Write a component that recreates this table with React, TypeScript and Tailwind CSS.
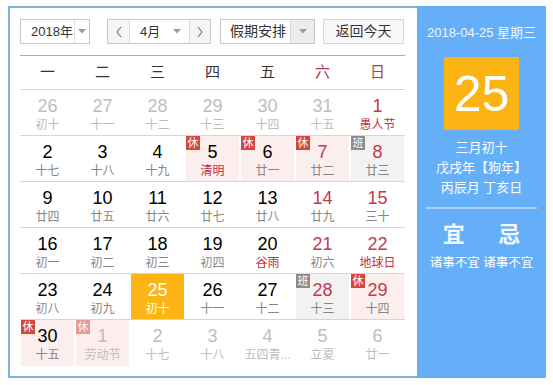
import React from 'react';

type Day = {
    n: number;
    l: string;
    other?: boolean;
    fest?: boolean;
    tag?: '休' | '班';
    today?: boolean;
};

const WEEK = ['一', '二', '三', '四', '五', '六', '日'];

const ROWS: Day[][] = [
    [
        { n: 26, l: '初十', other: true },
        { n: 27, l: '十一', other: true },
        { n: 28, l: '十二', other: true },
        { n: 29, l: '十三', other: true },
        { n: 30, l: '十四', other: true },
        { n: 31, l: '十五', other: true },
        { n: 1, l: '愚人节', fest: true },
    ],
    [
        { n: 2, l: '十七' },
        { n: 3, l: '十八' },
        { n: 4, l: '十九' },
        { n: 5, l: '清明', fest: true, tag: '休' },
        { n: 6, l: '廿一', tag: '休' },
        { n: 7, l: '廿二', tag: '休' },
        { n: 8, l: '廿三', tag: '班' },
    ],
    [
        { n: 9, l: '廿四' },
        { n: 10, l: '廿五' },
        { n: 11, l: '廿六' },
        { n: 12, l: '廿七' },
        { n: 13, l: '廿八' },
        { n: 14, l: '廿九' },
        { n: 15, l: '三十' },
    ],
    [
        { n: 16, l: '初一' },
        { n: 17, l: '初二' },
        { n: 18, l: '初三' },
        { n: 19, l: '初四' },
        { n: 20, l: '谷雨', fest: true },
        { n: 21, l: '初六' },
        { n: 22, l: '地球日', fest: true },
    ],
    [
        { n: 23, l: '初八' },
        { n: 24, l: '初九' },
        { n: 25, l: '初十', today: true },
        { n: 26, l: '十一' },
        { n: 27, l: '十二' },
        { n: 28, l: '十三', tag: '班' },
        { n: 29, l: '十四', tag: '休' },
    ],
    [
        { n: 30, l: '十五', tag: '休' },
        { n: 1, l: '劳动节', other: true, tag: '休' },
        { n: 2, l: '十七', other: true },
        { n: 3, l: '十八', other: true },
        { n: 4, l: '五四青...', other: true },
        { n: 5, l: '立夏', other: true },
        { n: 6, l: '廿一', other: true },
    ],
];

const FONT = "font-['Liberation_Sans','Noto_Sans_CJK_SC',sans-serif]";

// small grey triangle used in the select boxes
const Caret = () => (
    <svg width="8" height="5" viewBox="0 0 8 5">
        <polygon points="0,0 8,0 4,4.5" fill="#9a9a9a" />
    </svg>
);

const Chevron = ({ dir }: { dir: 'left' | 'right' }) => (
    <svg width="8" height="12" viewBox="0 0 8 12">
        <polyline
            points={dir === 'left' ? '6,1 2,6 6,11' : '2,1 6,6 2,11'}
            fill="none"
            stroke="#555"
            strokeWidth="1"
        />
    </svg>
);

const Cell = ({ d, col }: { d: Day; col: number }) => {
    const weekend = col >= 5;
    let bg = '';
    if (d.today) bg = 'bg-[#fcb514]';
    else if (d.tag === '休') bg = 'bg-[#fdeeee]';
    else if (d.tag === '班') bg = 'bg-[#f2f2f2]';

    let numColor = 'text-black';
    if (d.other) numColor = 'text-[#bdbdbd]';
    else if (d.today) numColor = 'text-white';
    else if (weekend) numColor = 'text-[#c23a4c]';

    let lunarColor = 'text-[#868686]';
    if (d.other) lunarColor = 'text-[#bdbdbd]';
    else if (d.today) lunarColor = 'text-white';
    else if (d.fest) lunarColor = 'text-[#c2303c]';

    return (
        <div className={`relative mx-px flex flex-col items-center ${bg}`}>
            {d.tag && (
                <span
                    className={`absolute left-0 top-0 flex h-[14px] w-[14px] items-center justify-center text-[11px] leading-none text-white ${
                        d.tag === '休' ? 'bg-[#d5473d]' : 'bg-[#8c8c8c]'
                    } ${d.other ? 'opacity-50' : ''}`}
                >
                    {d.tag}
                </span>
            )}
            <span className={`pt-[5px] text-[18px] leading-[22px] ${numColor}`}>{d.n}</span>
            <span className={`whitespace-nowrap text-[12px] leading-[16px] ${lunarColor}`}>{d.l}</span>
        </div>
    );
};

export default function App() {
    return (
        <div className={`h-[385px] w-[553px] bg-white pl-[8px] pt-[6px] ${FONT}`}>
            <div className="flex h-[372px] w-[538px]">
                {/* calendar side */}
                <div className="h-full w-[409px] border-2 border-r-0 border-[#80b6d2] bg-white">
                    <div className="ml-[10px] mt-[11px] flex h-[25px] items-stretch text-[13px] text-[#333]">
                        <div className="flex w-[70px] border border-[#c8c8c8]">
                            <span className="flex flex-1 items-center pl-[10px]">2018年</span>
                            <span className="flex w-[15px] items-center justify-center border-l border-[#e0e0e0]">
                                <Caret />
                            </span>
                        </div>
                        <div className="ml-[17px] flex w-[104px] border border-[#c8c8c8]">
                            <span className="flex w-[22px] items-center justify-center border-r border-[#dcdcdc] bg-[#f5f5f5]">
                                <Chevron dir="left" />
                            </span>
                            <span className="flex flex-1 items-center justify-between pl-[10px] pr-[8px]">
                                4月
                                <Caret />
                            </span>
                            <span className="flex w-[21px] items-center justify-center border-l border-[#dcdcdc] bg-[#f5f5f5]">
                                <Chevron dir="right" />
                            </span>
                        </div>
                        <div className="ml-[9px] flex w-[95px] border border-[#c8c8c8]">
                            <span className="flex flex-1 items-center pl-[9px] text-[14px]">假期安排</span>
                            <span className="flex w-[24px] items-center justify-center border-l border-[#d8d8d8] bg-[#ececec]">
                                <Caret />
                            </span>
                        </div>
                        <div className="ml-[8px] flex w-[81px] items-center justify-center border border-[#d6d6d6] bg-[#f8f8f8] text-[14px]">
                            返回今天
                        </div>
                    </div>

                    <div className="ml-[10px] mt-[11px] w-[385px]">
                        <div className="grid h-[35px] grid-cols-7 items-center border-y border-t-[#8fb8c6] border-b-[#d9d9d9] text-[15px]">
                            {WEEK.map((w, i) => (
                                <span
                                    key={w}
                                    className={`text-center ${i >= 5 ? 'text-[#b23a52]' : 'text-[#333]'}`}
                                >
                                    {w}
                                </span>
                            ))}
                        </div>
                        {ROWS.map((row, r) => (
                            <div
                                key={r}
                                className={`grid h-[46px] grid-cols-7 ${r < ROWS.length - 1 ? 'border-b border-[#d6d6d6]' : ''}`}
                            >
                                {row.map((d, c) => (
                                    <Cell key={c} d={d} col={c} />
                                ))}
                            </div>
                        ))}
                    </div>
                </div>

                {/* today panel */}
                <div className="flex h-full w-[129px] flex-col items-center bg-[#65aff8] text-white">
                    <div className="pt-[18px] text-[13px] leading-[18px] text-[#eef6ff]">2018-04-25 星期三</div>
                    <div className="mt-[15px] flex h-[73px] w-[75px] items-center justify-center bg-[#fcb415] text-[50px] leading-none">
                        25
                    </div>
                    <div className="mt-[8px] flex flex-col items-center text-[13px] leading-[20px]">
                        <span>三月初十</span>
                        <span>戊戌年【狗年】</span>
                        <span>丙辰月 丁亥日</span>
                    </div>
                    <div className="mt-[9px] w-[111px] border-t-2 border-[#a6cffb]" />
                    <div className="mt-[12px] flex w-[111px] text-[22px] font-bold leading-[28px] text-[#f2f8ff]">
                        <span className="flex-1 text-center">宜</span>
                        <span className="flex-1 text-center">忌</span>
                    </div>
                    <div className="mt-[6px] whitespace-nowrap text-[12.5px] leading-[16px]">诸事不宜 诸事不宜</div>
                </div>
            </div>
        </div>
    );
}
